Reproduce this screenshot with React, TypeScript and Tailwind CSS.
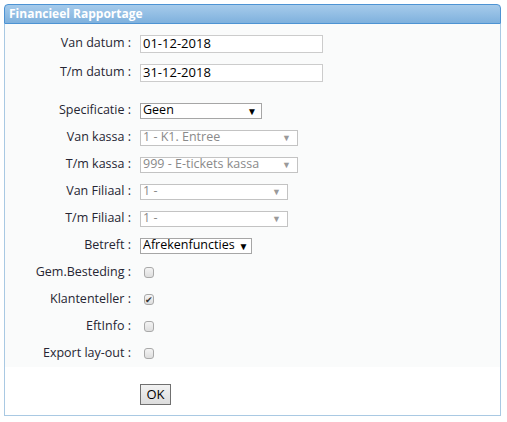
import React from "react";

const font = { fontFamily: '"Open Sans", "Noto Sans", Arial, sans-serif' };

function Row({ label, h = "h-[27px]", children }: { label: string; h?: string; children: React.ReactNode }) {
	return (
		<div className={`flex items-center ${h}`}>
			<div className="w-[127px] pr-[1px] text-right text-[12.5px] text-[#262633] whitespace-nowrap">{label} :</div>
			<div className="ml-[8px] flex items-center">{children}</div>
		</div>
	);
}

function FakeSelect({ value, width, disabled }: { value: string; width: string; disabled?: boolean }) {
	return (
		<div
			className={`flex h-[16px] items-center justify-between gap-[4px] border bg-white pl-[2px] pr-[4px] text-[12.5px] leading-none ${width} ${
				disabled ? "border-[#c3c3c3] text-[#8a8a8a]" : "border-[#a6a6a6] text-black"
			}`}
		>
			<span className="whitespace-nowrap">{value}</span>
			<span className={disabled ? "pr-[2px] text-[9px] text-[#9a9a9a]" : "text-[10px] text-black"}>▼</span>
		</div>
	);
}

function Check({ checked }: { checked?: boolean }) {
	return (
		<div className="ml-[4px] flex h-[11px] w-[10px] items-center justify-center rounded-[3px] border border-[#a9a9a9] bg-gradient-to-b from-[#f4f4f4] to-[#dedede]">
			{checked && <span className="text-[9px] leading-none text-[#333]">✔</span>}
		</div>
	);
}

export default function App() {
	return (
		<div className="min-h-[422px] bg-white pl-[4px] pt-[4px]" style={font}>
			<div className="w-[497px]">
				<div className="flex h-[20px] items-center rounded-t-[4px] border border-[#4d93d3] bg-gradient-to-b from-[#a6cbeb] to-[#7fb1dd] pl-[4px] text-[12px] font-bold text-white">
					Financieel Rapportage
				</div>
				<div className="border-x border-b border-[#a9c9e3] bg-white pb-[10px]">
					<div className="bg-[#fafbfb] pt-[5px]">
						<Row label="Van datum" h="h-[29px]">
							<div className="flex h-[18px] w-[183px] items-center border border-[#cccccc] bg-white pl-[2px] text-[13px] text-black">01-12-2018</div>
						</Row>
						<Row label="T/m datum" h="h-[29px]">
							<div className="flex h-[18px] w-[183px] items-center border border-[#cccccc] bg-white pl-[2px] text-[13px] text-black">31-12-2018</div>
						</Row>
						<div className="h-[10px]" />
						<Row label="Specificatie">
							<FakeSelect value="Geen" width="w-[122px]" />
						</Row>
						<Row label="Van kassa">
							<FakeSelect value="1 - K1. Entree" width="w-[158px]" disabled />
						</Row>
						<Row label="T/m kassa">
							<FakeSelect value="999 - E-tickets kassa" width="w-[158px]" disabled />
						</Row>
						<Row label="Van Filiaal">
							<FakeSelect value="1 -" width="w-[148px]" disabled />
						</Row>
						<Row label="T/m Filiaal">
							<FakeSelect value="1 -" width="w-[148px]" disabled />
						</Row>
						<Row label="Betreft">
							<FakeSelect value="Afrekenfuncties" width="w-[112px]" />
						</Row>
						<Row label="Gem.Besteding">
							<Check />
						</Row>
						<Row label="Klantenteller">
							<Check checked />
						</Row>
						<Row label="EftInfo">
							<Check />
						</Row>
						<Row label="Export lay-out">
							<Check />
						</Row>
					</div>
					<div className="pl-[135px] pt-[17px]">
						<button className="flex h-[21px] w-[31px] items-center justify-center border border-[#707070] bg-gradient-to-b from-[#f2f2f2] to-[#dddddd] text-[13px] text-black">
							OK
						</button>
					</div>
				</div>
			</div>
		</div>
	);
}
